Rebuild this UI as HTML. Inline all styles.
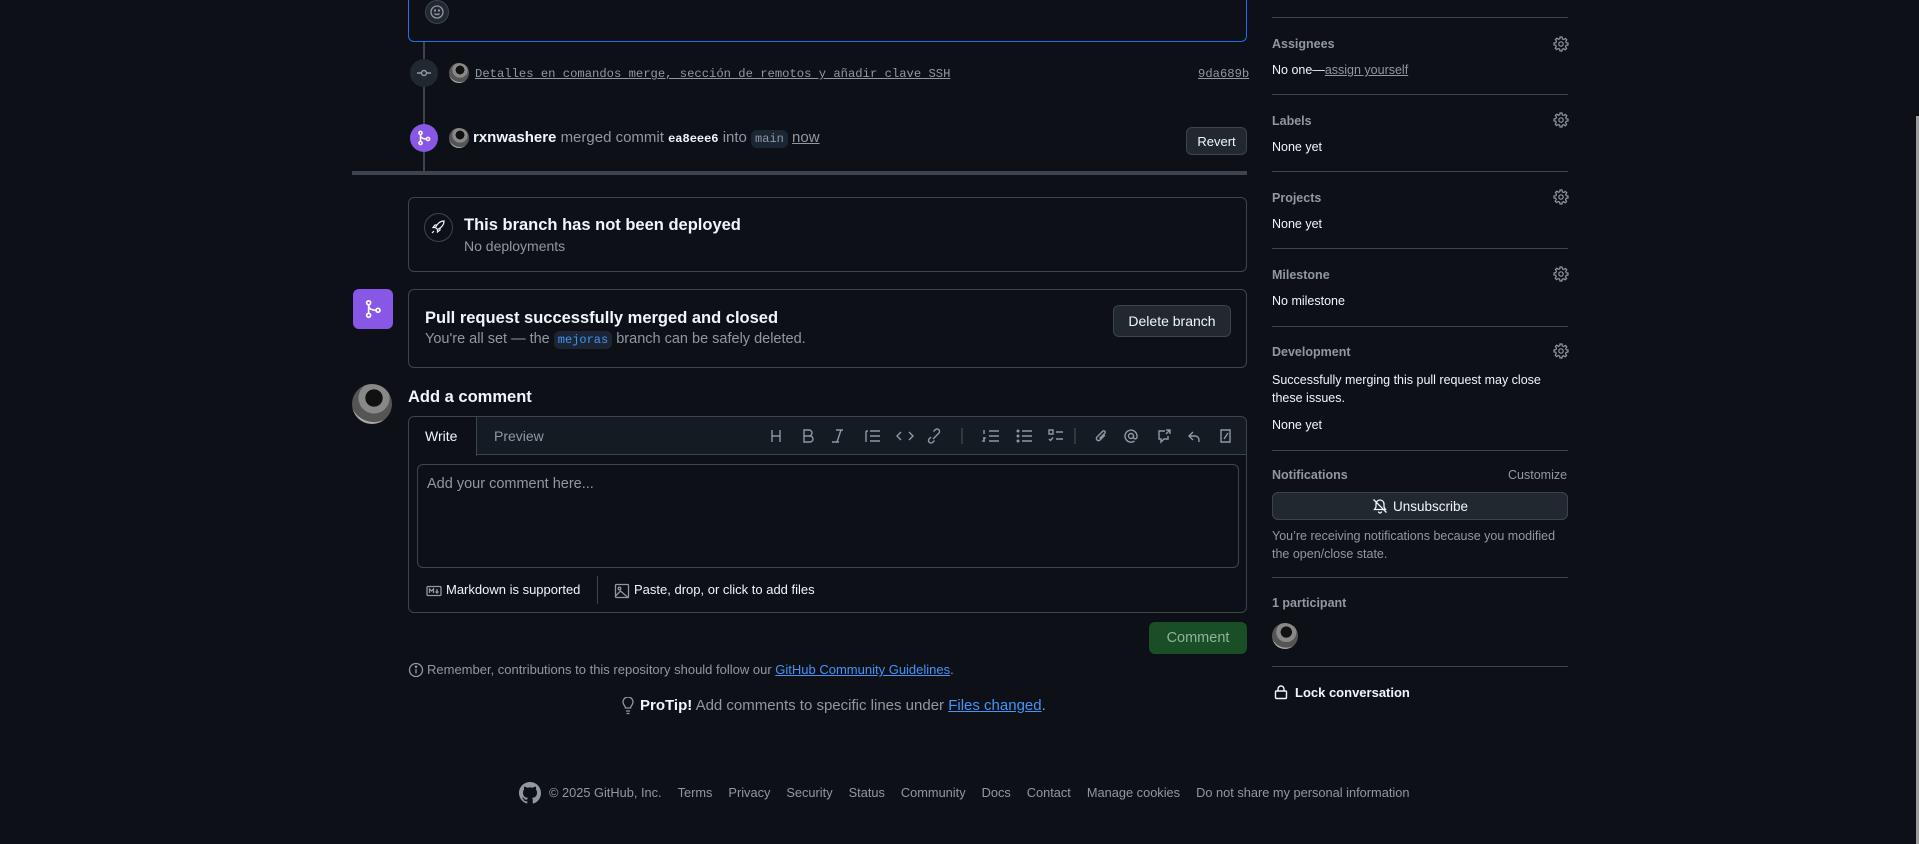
<!DOCTYPE html>
<html><head><meta charset="utf-8"><style>
*{box-sizing:border-box;margin:0;padding:0}
body{width:1919px;height:844px;background:#0d1117;color:#f0f6fc;font-family:"Liberation Sans",sans-serif;font-size:14px;position:relative;overflow:hidden}
.a{position:absolute}
.muted{color:#9198a1}
.box{position:absolute;border:1px solid #3d444d;border-radius:6px}
.btn{position:absolute;background:#212830;border:1px solid #3d444d;border-radius:6px;color:#f0f6fc;font-size:14px;display:flex;align-items:center;justify-content:center}
.hr{position:absolute;left:1272px;width:296px;height:1px;background:#3d444d}
.sh{position:absolute;left:1272px;font-size:12.5px;font-weight:bold;color:#9198a1}
.sv{position:absolute;left:1272px;font-size:12.5px;color:#f0f6fc}
.gear{position:absolute;left:1553px}
.av{position:absolute;border-radius:50%;background:radial-gradient(circle at 55% 35%,#111 0 25%,#888 26% 45%,#555 46% 70%,#aaa 71%)}
code{font-family:"Liberation Mono",monospace}
</style></head><body>
<div class="a" style="left:408px;top:-10px;width:839px;height:52px;border:1px solid #1f6feb;border-top:none;border-radius:0 0 6px 6px"></div>
<div class="a" style="left:425px;top:0;width:24px;height:24px;border-radius:50%;background:#212830;border:1px solid #3d444d"></div>
<svg class="a" style="left:429px;top:4px" width="16" height="16" viewBox="0 0 16 16" fill="none" stroke="#9198a1" stroke-width="1.3"><circle cx="8" cy="8" r="6"/><path d="M5.5 9.5c1.3 1.4 3.7 1.4 5 0"/><circle cx="6" cy="6.5" r=".5" fill="#9198a1"/><circle cx="10" cy="6.5" r=".5" fill="#9198a1"/></svg>
<div class="a" style="left:423px;top:42px;width:2px;height:130px;background:#3d444d"></div>
<div class="a" style="left:410px;top:59px;width:28px;height:28px;border-radius:50%;background:#212830"></div>
<svg class="a" style="left:416px;top:65px" width="16" height="16" viewBox="0 0 16 16" fill="none" stroke="#9198a1" stroke-width="1.5"><circle cx="8" cy="8" r="2.5"/><path d="M1 8h4.5M10.5 8H15"/></svg>
<div class="av" style="left:449px;top:63px;width:20px;height:20px"></div>
<div class="a muted" style="left:475px;top:67px;font-family:'Liberation Mono',monospace;font-size:12.2px;text-decoration:underline">Detalles en comandos merge, sección de remotos y añadir clave SSH</div>
<div class="a muted" style="left:1198px;top:67px;font-family:'Liberation Mono',monospace;font-size:12.2px;text-decoration:underline">9da689b</div>
<div class="a" style="left:410px;top:124px;width:28px;height:28px;border-radius:50%;background:#8957e5"></div>
<svg class="a" style="left:416px;top:130px" width="16" height="16" viewBox="0 0 16 16" fill="none" stroke="#fff" stroke-width="1.5"><circle cx="4.5" cy="3" r="1.6"/><circle cx="4.5" cy="13" r="1.6"/><circle cx="12" cy="9" r="1.6"/><path d="M4.5 4.6v6.8M4.5 5c0 3 3 4 5.9 4"/></svg>
<div class="av" style="left:449px;top:128px;width:20px;height:20px"></div>
<div class="a" style="left:473px;top:129px;font-size:15px;white-space:nowrap"><b>rxnwashere</b> <span class="muted">merged commit</span> <code style="font-size:12px;font-weight:bold">ea8eee6</code> <span class="muted">into</span> <code style="font-size:12px;background:#1c2533;color:#9198a1;padding:2px 4px;border-radius:6px">main</code> <span class="muted" style="text-decoration:underline">now</span></div>
<div class="btn" style="left:1186px;top:127px;width:61px;height:28px;font-size:13px">Revert</div>
<div class="a" style="left:352px;top:171px;width:895px;height:4px;background:#3d444d"></div>
<div class="box" style="left:408px;top:197px;width:839px;height:75px"></div>
<div class="a" style="left:424px;top:213px;width:29px;height:29px;border-radius:50%;border:1px solid #3d444d"></div>
<svg class="a" style="left:430px;top:219px" width="16" height="16" viewBox="0 0 16 16" fill="none" stroke="#f0f6fc" stroke-width="1.2"><path d="M14 2c-4 0-7 3-8.5 6.5l2 2C11 9 14 6 14 2zM5.5 8.5H3l2-2.5h2.5M7.5 10.5V13l2.5-2V8.5M4 12l-2 2"/></svg>
<div class="a" style="left:464px;top:216px;font-size:16.5px;font-weight:bold">This branch has not been deployed</div>
<div class="a muted" style="left:464px;top:238px;font-size:14px">No deployments</div>
<div class="a" style="left:353px;top:289px;width:40px;height:40px;border-radius:6px;background:#8957e5"></div>
<svg class="a" style="left:363px;top:299px" width="20" height="20" viewBox="0 0 16 16" fill="none" stroke="#fff" stroke-width="1.3"><circle cx="4.5" cy="3" r="1.6"/><circle cx="4.5" cy="13" r="1.6"/><circle cx="12" cy="9" r="1.6"/><path d="M4.5 4.6v6.8M4.5 5c0 3 3 4 5.9 4"/></svg>
<div class="box" style="left:408px;top:289px;width:839px;height:79px"></div>
<div class="a" style="left:425px;top:309px;font-size:16.5px;font-weight:bold">Pull request successfully merged and closed</div>
<div class="a muted" style="left:425px;top:331px;font-size:14.5px;white-space:nowrap">You're all set — the <code style="font-size:12px;background:#1c2533;color:#4493f8;padding:2px 4px;border-radius:6px">mejoras</code> branch can be safely deleted.</div>
<div class="btn" style="left:1113px;top:305px;width:118px;height:32px">Delete branch</div>
<div class="av" style="left:352px;top:384px;width:40px;height:40px"></div>
<div class="a" style="left:408px;top:388px;font-size:16.5px;font-weight:bold">Add a comment</div>
<div class="box" style="left:408px;top:416px;width:839px;height:197px"></div>
<div class="a" style="left:409px;top:417px;width:837px;height:38px;background:#151b23;border-bottom:1px solid #3d444d;border-radius:6px 6px 0 0"></div>
<div class="a" style="left:409px;top:417px;width:68px;height:39px;background:#0d1117;border-right:1px solid #3d444d;border-radius:6px 0 0 0"></div>
<div class="a" style="left:425px;top:428px;font-size:14px">Write</div>
<div class="a muted" style="left:494px;top:428px;font-size:14px">Preview</div>
<svg class="a" style="left:768px;top:428px" width="480" height="16" viewBox="0 0 480 16" fill="none" stroke="#9198a1" stroke-width="1.4">
<path d="M4 2v12M12 2v12M4 8h8"/>
<path d="M36 2h5a3 3 0 010 6h-5zM36 8h6a3 3 0 010 6h-6z"/>
<path d="M68 2h7M64 14h7M73 2l-4 12"/>
<path d="M98 3v11M102 3h10M102 8h10M102 13h10M98 3h2"/>
<path d="M133 4l-4 4 4 4M141 4l4 4-4 4"/>
<path d="M163 9l-2 2a2.5 2.5 0 003.5 3.5l2-2M169 7l2-2a2.5 2.5 0 00-3.5-3.5l-2 2M165 11l4-4"/>
<path d="M194 0v16" stroke="#3d444d"/>
<path d="M221 3h10M221 8h10M221 13h10M216 2v4M215 10h2l-2 3h2"/>
<path d="M254 3h10M254 8h10M254 13h10"/><circle cx="250" cy="3" r=".8" fill="#9198a1"/><circle cx="250" cy="8" r=".8" fill="#9198a1"/><circle cx="250" cy="13" r=".8" fill="#9198a1"/>
<path d="M281 2h4v4h-4zM288 4h7M288 11h7M281 11l1.5 1.5 2.5-3"/>
<path d="M307 0v16" stroke="#3d444d"/>
<path d="M337 7l-5 5a2 2 0 01-3-3l6-6a1.5 1.5 0 012 2l-5.5 5.5"/>
<circle cx="363" cy="8" r="2.5"/><path d="M365.5 8v1.5a1.8 1.8 0 003.5 0V8a6 6 0 10-2.5 5"/>
<path d="M397 3h-6v8h2v3l3-3h4V8M398 2h4v4M402 2l-4 4"/>
<path d="M425 4l-4 4 4 4M421 8h6a4 4 0 014 4v2"/>
<path d="M453 2h9v12h-9zM460 5l-4 6"/>
</svg>
<div class="a" style="left:417px;top:464px;width:822px;height:104px;border:1px solid #3d444d;border-radius:6px;background:#0d1117"></div>
<div class="a muted" style="left:427px;top:476px;font-size:14.5px">Add your comment here...</div>
<div class="a" style="left:597px;top:576px;width:1px;height:28px;background:#3d444d"></div>
<svg class="a" style="left:426px;top:583px" width="16" height="16" viewBox="0 0 16 16" fill="none" stroke="#9198a1" stroke-width="1.3"><rect x="1" y="3.5" width="14" height="9" rx="1"/><path d="M3.5 10V6l2 2 2-2v4M11 6v4M9.5 8.5l1.5 1.5 1.5-1.5"/></svg>
<div class="a" style="left:446px;top:582px;font-size:13px">Markdown is supported</div>
<svg class="a" style="left:614px;top:583px" width="16" height="16" viewBox="0 0 16 16" fill="none" stroke="#9198a1" stroke-width="1.3"><rect x="1.5" y="1.5" width="13" height="13" rx="1"/><circle cx="5.5" cy="5.5" r="1.3"/><path d="M1.5 13l5-5 8 7"/></svg>
<div class="a" style="left:634px;top:582px;font-size:13px">Paste, drop, or click to add files</div>
<div class="a" style="left:1149px;top:622px;width:98px;height:32px;border-radius:6px;background:#1a4e27;color:#8db69a;font-size:14.5px;display:flex;align-items:center;justify-content:center">Comment</div>
<svg class="a" style="left:408px;top:662px" width="16" height="16" viewBox="0 0 16 16" fill="none" stroke="#9198a1" stroke-width="1.3"><circle cx="8" cy="8" r="6.5"/><path d="M8 7v4.5"/><circle cx="8" cy="4.8" r=".6" fill="#9198a1"/></svg>
<div class="a muted" style="left:427px;top:662px;font-size:13px;white-space:nowrap">Remember, contributions to this repository should follow our <span style="color:#4493f8;text-decoration:underline">GitHub Community Guidelines</span>.</div>
<svg class="a" style="left:620px;top:697px" width="16" height="18" viewBox="0 0 16 18" fill="none" stroke="#9198a1" stroke-width="1.3"><path d="M5.5 11c0-2-2.5-3-2.5-6a5 5 0 0110 0c0 3-2.5 4-2.5 6zM6 14h4M6.5 16.5h3"/></svg>
<div class="a" style="left:640px;top:697px;font-size:15px;white-space:nowrap"><b>ProTip!</b> <span class="muted">Add comments to specific lines under</span> <span style="color:#4493f8;text-decoration:underline">Files changed</span><span class="muted">.</span></div>
<svg class="a" style="left:519px;top:782px" width="22" height="22" viewBox="0 0 16 16" fill="#9198a1"><path d="M8 0C3.58 0 0 3.58 0 8c0 3.540 2.29 6.53 5.47 7.59.4.07.55-.17.55-.38v-1.33c-2.23.48-2.7-1.07-2.7-1.070-.36-.93-.89-1.17-.89-1.17-.73-.5.06-.49.06-.49.8.06 1.23.83 1.23.83.72 1.22 1.87.87 2.33.66.07-.52.28-.87.5-1.07-1.78-.2-3.64-.89-3.64-3.95 0-.87.31-1.59.82-2.150-.08-.2-.36-1.02.08-2.12 0 0 .67-.21 2.2.82a7.6 7.6 0 014 0c1.53-1.04 2.2-.82 2.2-.82.44 1.1.16 1.92.08 2.12.51.56.82 1.27.82 2.15 0 3.07-1.87 3.750-3.65 3.95.29.25.54.73.54 1.48v2.2c0 .21.15.46.55.38A8.01 8.01 0 0016 8c0-4.42-3.58-8-8-8z"/></svg>
<div class="a muted" style="left:549px;top:785px;font-size:12.8px;white-space:nowrap">© 2025 GitHub, Inc.<span style="margin-left:16px">Terms</span><span style="margin-left:16px">Privacy</span><span style="margin-left:16px">Security</span><span style="margin-left:16px">Status</span><span style="margin-left:16px">Community</span><span style="margin-left:16px">Docs</span><span style="margin-left:16px">Contact</span><span style="margin-left:16px">Manage cookies</span><span style="margin-left:16px">Do not share my personal information</span></div>
<div class="hr" style="top:17px"></div>
<div class="sh" style="top:37px">Assignees</div><div class="sv" style="top:63px">No one—<span class="muted" style="text-decoration:underline">assign yourself</span></div>
<div class="hr" style="top:94px"></div>
<div class="sh" style="top:114px">Labels</div><div class="sv" style="top:140px">None yet</div>
<div class="hr" style="top:171px"></div>
<div class="sh" style="top:191px">Projects</div><div class="sv" style="top:217px">None yet</div>
<div class="hr" style="top:248px"></div>
<div class="sh" style="top:268px">Milestone</div><div class="sv" style="top:294px">No milestone</div>
<div class="hr" style="top:326px"></div>
<div class="sh" style="top:345px">Development</div>
<div class="sv" style="top:371px;width:290px;line-height:18px">Successfully merging this pull request may close these issues.</div>
<div class="sv" style="top:418px">None yet</div>
<div class="hr" style="top:450px"></div>
<div class="sh" style="top:468px">Notifications</div>
<div class="a muted" style="left:1508px;top:468px;font-size:12.5px">Customize</div>
<div class="btn" style="left:1272px;top:492px;width:296px;height:28px;font-size:13.5px"><svg width="16" height="16" viewBox="0 0 16 16" fill="none" stroke="#f0f6fc" stroke-width="1.3" style="margin-right:5px"><path d="M4 6a4 4 0 018 0v3l1.5 2.5h-11L4 9zM6.5 13.5a1.5 1.5 0 003 0M1.5 1.5l13 13"/></svg>Unsubscribe</div>
<div class="a muted" style="left:1272px;top:527px;width:290px;font-size:12.5px;line-height:18px">You’re receiving notifications because you modified the open/close state.</div>
<div class="hr" style="top:577px"></div>
<div class="sh" style="top:596px">1 participant</div>
<div class="av" style="left:1272px;top:623px;width:26px;height:26px"></div>
<div class="hr" style="top:666px"></div>
<svg class="a" style="left:1273px;top:684px" width="16" height="16" viewBox="0 0 16 16" fill="none" stroke="#f0f6fc" stroke-width="1.4"><rect x="2.5" y="7" width="11" height="7.5" rx="1"/><path d="M5 7V5a3 3 0 016 0v2"/></svg>
<div class="a" style="left:1295px;top:685px;font-size:13px;font-weight:bold">Lock conversation</div>
<svg class="gear" style="top:36px" width="16" height="16" viewBox="0 0 16 16" fill="none" stroke="#9198a1" stroke-width="1.2"><circle cx="8" cy="8" r="2.2"/><path d="M7 1h2l.4 1.9 1.4.6 1.6-1.1 1.4 1.4-1.1 1.6.6 1.4L15 7v2l-1.9.4-.6 1.4 1.1 1.6-1.4 1.4-1.6-1.1-1.4.6L9 15H7l-.4-1.9-1.4-.6-1.6 1.1-1.4-1.4 1.1-1.6-.6-1.4L1 9V7l1.9-.4.6-1.4-1.1-1.6 1.4-1.4 1.6 1.1 1.4-.6z"/></svg>
<svg class="gear" style="top:112px" width="16" height="16" viewBox="0 0 16 16" fill="none" stroke="#9198a1" stroke-width="1.2"><circle cx="8" cy="8" r="2.2"/><path d="M7 1h2l.4 1.9 1.4.6 1.6-1.1 1.4 1.4-1.1 1.6.6 1.4L15 7v2l-1.9.4-.6 1.4 1.1 1.6-1.4 1.4-1.6-1.1-1.4.6L9 15H7l-.4-1.9-1.4-.6-1.6 1.1-1.4-1.4 1.1-1.6-.6-1.4L1 9V7l1.9-.4.6-1.4-1.1-1.6 1.4-1.4 1.6 1.1 1.4-.6z"/></svg>
<svg class="gear" style="top:189px" width="16" height="16" viewBox="0 0 16 16" fill="none" stroke="#9198a1" stroke-width="1.2"><circle cx="8" cy="8" r="2.2"/><path d="M7 1h2l.4 1.9 1.4.6 1.6-1.1 1.4 1.4-1.1 1.6.6 1.4L15 7v2l-1.9.4-.6 1.4 1.1 1.6-1.4 1.4-1.6-1.1-1.4.6L9 15H7l-.4-1.9-1.4-.6-1.6 1.1-1.4-1.4 1.1-1.6-.6-1.4L1 9V7l1.9-.4.6-1.4-1.1-1.6 1.4-1.4 1.6 1.1 1.4-.6z"/></svg>
<svg class="gear" style="top:266px" width="16" height="16" viewBox="0 0 16 16" fill="none" stroke="#9198a1" stroke-width="1.2"><circle cx="8" cy="8" r="2.2"/><path d="M7 1h2l.4 1.9 1.4.6 1.6-1.1 1.4 1.4-1.1 1.6.6 1.4L15 7v2l-1.9.4-.6 1.4 1.1 1.6-1.4 1.4-1.6-1.1-1.4.6L9 15H7l-.4-1.9-1.4-.6-1.6 1.1-1.4-1.4 1.1-1.6-.6-1.4L1 9V7l1.9-.4.6-1.4-1.1-1.6 1.4-1.4 1.6 1.1 1.4-.6z"/></svg>
<svg class="gear" style="top:343px" width="16" height="16" viewBox="0 0 16 16" fill="none" stroke="#9198a1" stroke-width="1.2"><circle cx="8" cy="8" r="2.2"/><path d="M7 1h2l.4 1.9 1.4.6 1.6-1.1 1.4 1.4-1.1 1.6.6 1.4L15 7v2l-1.9.4-.6 1.4 1.1 1.6-1.4 1.4-1.6-1.1-1.4.6L9 15H7l-.4-1.9-1.4-.6-1.6 1.1-1.4-1.4 1.1-1.6-.6-1.4L1 9V7l1.9-.4.6-1.4-1.1-1.6 1.4-1.4 1.6 1.1 1.4-.6z"/></svg>
<div class="a" style="left:1916px;top:116px;width:3px;height:728px;background:#9a9a9a"></div>
</body></html>
